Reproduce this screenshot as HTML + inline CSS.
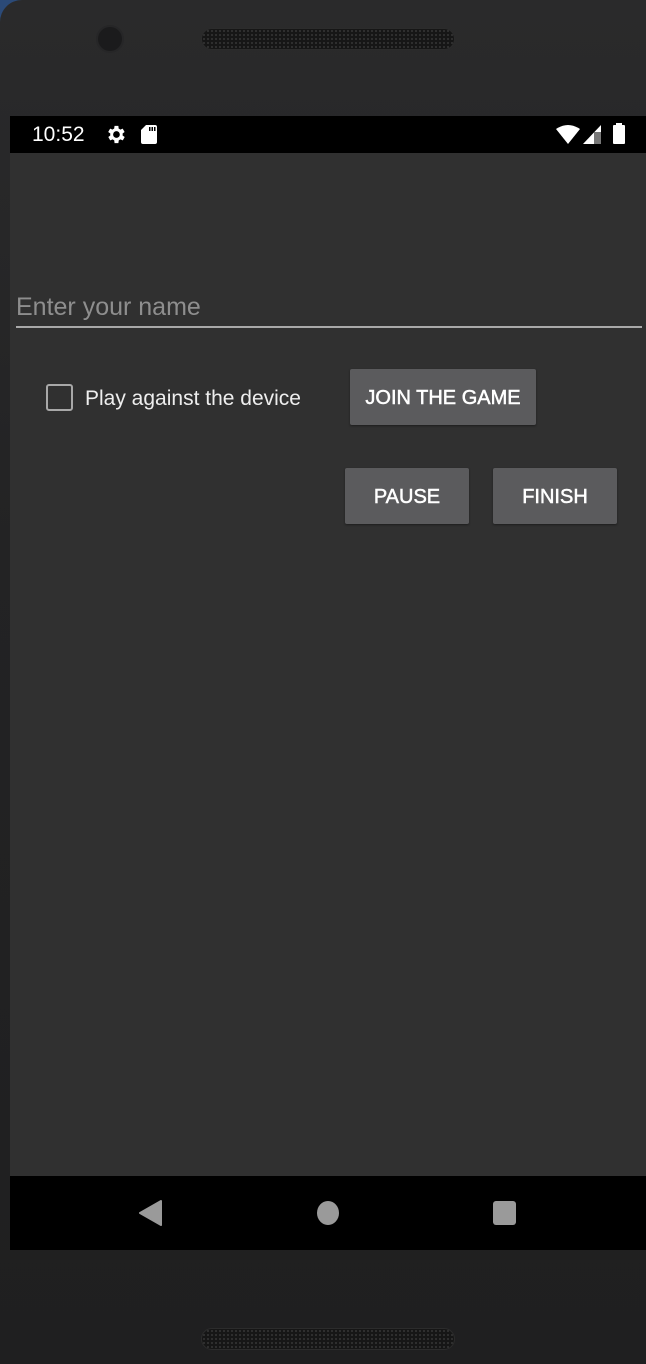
<!DOCTYPE html>
<html><head><meta charset="utf-8"><style>
*{margin:0;padding:0;box-sizing:border-box}
html,body{width:646px;height:1364px;overflow:hidden;background:#2b4a78}
.phone{position:absolute;left:0;top:0;width:700px;height:1364px;background:linear-gradient(#2a2a2b,#232324 40%,#1f1f20);border-radius:22px 22px 0 0}
.spk{position:absolute;left:201px;width:254px;height:22px;border-radius:11px;background:#161616;background-image:radial-gradient(#333 0.8px,transparent 1.2px);background-size:4px 4px;border:1px solid #2c2c2c}
.cam{position:absolute;left:98px;top:27px;width:24px;height:24px;border-radius:50%;background:#1b1b1c;box-shadow:0 0 0 2px #262627}
.screen{position:absolute;left:10px;top:116px;width:636px;height:1134px;background:#303030}
.status{position:absolute;left:0;top:0;width:636px;height:37px;background:#000;color:#fff;font:21px "Liberation Sans",sans-serif}
.nav{position:absolute;left:0;top:1060px;width:636px;height:74px;background:#000}
.t{font-family:"Liberation Sans",sans-serif}
.btn{position:absolute;background:#5b5b5d;color:#fff;font:20px "Liberation Sans",sans-serif;-webkit-text-stroke:0.5px #fff;display:flex;align-items:center;justify-content:center;border-radius:2px;box-shadow:0 1px 2px rgba(0,0,0,.4);padding-top:2px}
</style></head><body>
<div class="phone">
<div class="cam"></div>
<div class="spk" style="top:28px"></div>
<div class="spk" style="top:1328px"></div>
</div>
<div class="screen">
 <div class="status">
  <span style="position:absolute;left:22px;top:7px">10:52</span>
  <svg style="position:absolute;left:94px;top:7px" width="23" height="23" viewBox="0 0 24 24"><path fill="#fff" d="M19.4 13a7.5 7.5 0 000-2l2.1-1.6-2-3.5-2.5 1a7 7 0 00-1.7-1L15 3h-4l-.4 2.9a7 7 0 00-1.7 1l-2.5-1-2 3.5L6.6 11a7.5 7.5 0 000 2l-2.1 1.6 2 3.5 2.5-1a7 7 0 001.7 1L11 21h4l.4-2.9a7 7 0 001.7-1l2.5 1 2-3.5zM13 15.5a3.5 3.5 0 110-7 3.5 3.5 0 010 7z"/></svg>
  <svg style="position:absolute;left:131px;top:9px" width="16" height="19" viewBox="0 0 16 19"><path fill="#fff" d="M5 0h9a2 2 0 012 2v15a2 2 0 01-2 2H2a2 2 0 01-2-2V5zM8 2v4h1.5V2zm2.5 0v4H12V2zM13 2v4h1.5V2z"/></svg>
  <svg style="position:absolute;left:546px;top:9px" width="26" height="19" viewBox="0 0 26 19"><path fill="#fff" d="M0 4Q12-4 24 4L12 19z"/></svg>
  <svg style="position:absolute;left:572px;top:9px" width="20" height="19" viewBox="0 0 20 19"><path fill="#fff" d="M19 0V19H1z"/><path fill="#777" d="M12 7h7v12h-7z"/></svg>
  <div style="position:absolute;left:603px;top:9px;width:12px;height:19px;background:#fff;border-radius:1px"></div>
  <div style="position:absolute;left:606px;top:7px;width:6px;height:3px;background:#fff"></div>
 </div>
 <div class="t" style="position:absolute;left:6px;top:177px;font-size:25px;color:#8e8e8e">Enter your name</div>
 <div style="position:absolute;left:6px;top:210px;width:626px;height:2px;background:#a8a8a8"></div>
 <div style="position:absolute;left:36px;top:268px;width:27px;height:27px;border:2.5px solid #a8a8a8;border-radius:3px"></div>
 <div class="t" style="position:absolute;left:75px;top:271px;font-size:21px;color:#eee">Play against the device</div>
 <div class="btn" style="left:340px;top:253px;width:186px;height:56px">JOIN THE GAME</div>
 <div class="btn" style="left:335px;top:352px;width:124px;height:56px">PAUSE</div>
 <div class="btn" style="left:483px;top:352px;width:124px;height:56px">FINISH</div>
 <div class="nav">
  <svg style="position:absolute;left:129px;top:24px" width="24" height="26" viewBox="0 0 24 26"><path fill="#9a9a9a" d="M22 1L1 13l21 12z" stroke="#9a9a9a" stroke-linejoin="round" stroke-width="2"/></svg>
  <div style="position:absolute;left:307px;top:25px;width:22px;height:24px;border-radius:50%;background:#9a9a9a"></div>
  <div style="position:absolute;left:483px;top:25px;width:23px;height:24px;border-radius:3px;background:#9a9a9a"></div>
 </div>
</div>
</body></html>
